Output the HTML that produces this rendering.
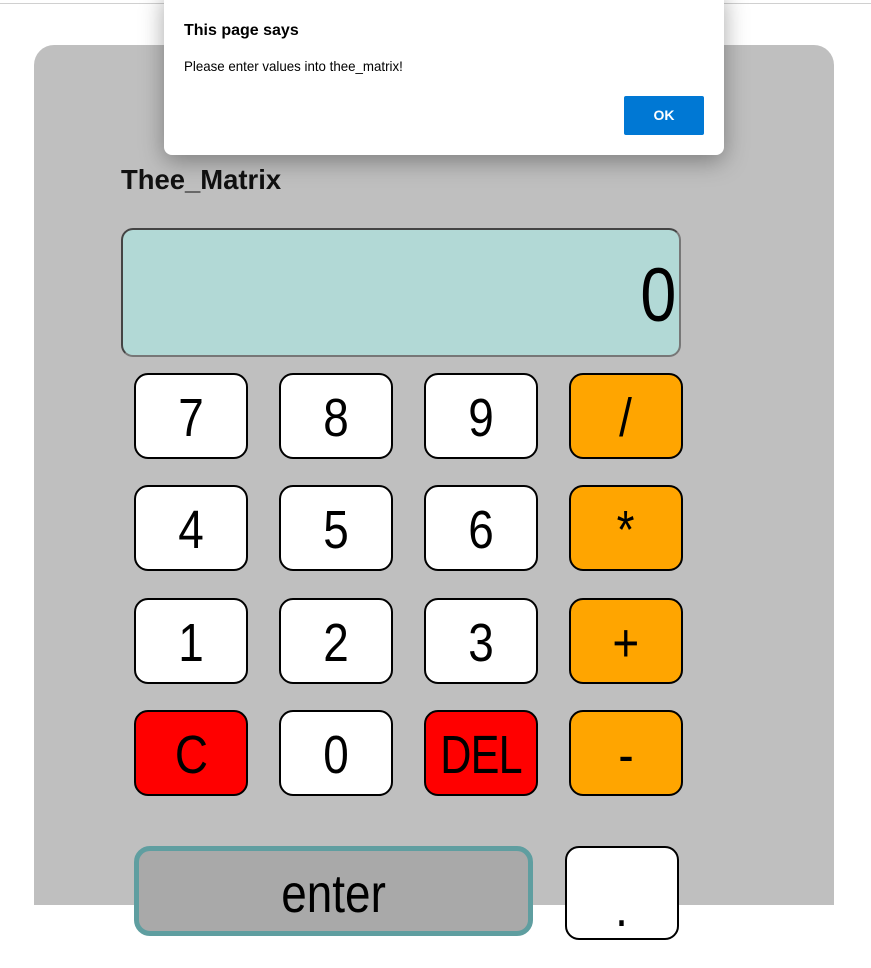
<!DOCTYPE html>
<html><head><style>
html,body{margin:0;padding:0;width:871px;height:905px;overflow:hidden;background:#fff;font-family:"Liberation Sans",Arial,sans-serif}
.topline{position:absolute;left:0;top:3px;width:871px;height:1px;background:#d0d0d0}
.box{position:absolute;left:34px;top:45px;width:800px;height:860px;background:#bfbfbf;border-radius:20px 20px 0 0}
.title{position:absolute;left:121px;top:164px;font-weight:bold;font-size:28px;color:#111;transform:scaleX(.98);transform-origin:left}
.disp{position:absolute;left:121px;top:228px;width:556px;height:125px;background:#b2d9d6;border:2px solid #444;border-bottom-color:#777;border-right-color:#777;border-radius:12px}
.disp span{position:absolute;right:3px;top:28px;font-size:76px;line-height:76px;transform:scaleX(.85);transform-origin:right}
.b{position:absolute;width:110px;height:82px;border:2px solid #000;border-radius:14px;background:#fff;text-align:center;color:#000}
.b span{display:inline-block;font-size:54px;line-height:86px;transform:scaleX(.85)}
.o{background:#ffa500}.r{background:#f00}
.enter{position:absolute;left:134px;top:846px;width:389px;height:80px;border:5px solid #5f9ea0;border-radius:16px;background:#a9a9a9;text-align:center}
.enter span{display:inline-block;font-size:54px;line-height:86px;transform:scaleX(.85)}
.dlg{position:absolute;left:164px;top:-10px;width:560px;height:165px;background:#fff;border-radius:8px;box-shadow:0 6px 24px rgba(0,0,0,.35)}
.dlg .h{position:absolute;left:20px;top:32px;font-weight:bold;font-size:16px}
.dlg p{position:absolute;left:20px;top:68px;margin:0;font-size:14px;transform:scaleX(.95);transform-origin:left}
.ok{position:absolute;left:460px;top:106px;width:80px;height:39px;background:#0078d4;border-radius:2px;color:#fff;font-weight:bold;font-size:14px;text-align:center;line-height:39px}
</style></head><body>
<div class="topline"></div>
<div class="box"></div>
<div class="title">Thee_Matrix</div>
<div class="disp"><span>0</span></div>
<div class="b" style="left:134px;top:373px"><span>7</span></div>
<div class="b" style="left:279px;top:373px"><span>8</span></div>
<div class="b" style="left:424px;top:373px"><span>9</span></div>
<div class="b o" style="left:569px;top:373px"><span>/</span></div>
<div class="b" style="left:134px;top:485px"><span>4</span></div>
<div class="b" style="left:279px;top:485px"><span>5</span></div>
<div class="b" style="left:424px;top:485px"><span>6</span></div>
<div class="b o" style="left:569px;top:485px"><span>*</span></div>
<div class="b" style="left:134px;top:598px"><span>1</span></div>
<div class="b" style="left:279px;top:598px"><span>2</span></div>
<div class="b" style="left:424px;top:598px"><span>3</span></div>
<div class="b o" style="left:569px;top:598px"><span>+</span></div>
<div class="b r" style="left:134px;top:710px"><span>C</span></div>
<div class="b" style="left:279px;top:710px"><span>0</span></div>
<div class="b r" style="left:424px;top:710px"><span style="transform:scaleX(.8);letter-spacing:-1px">DEL</span></div>
<div class="b o" style="left:569px;top:710px"><span>-</span></div>
<div class="enter"><span>enter</span></div>
<div class="b" style="left:565px;top:846px;height:90px"><span style="line-height:120px">.</span></div>
<div class="dlg"><div class="h">This page says</div><p>Please enter values into thee_matrix!</p><div class="ok">OK</div></div>
</body></html>
